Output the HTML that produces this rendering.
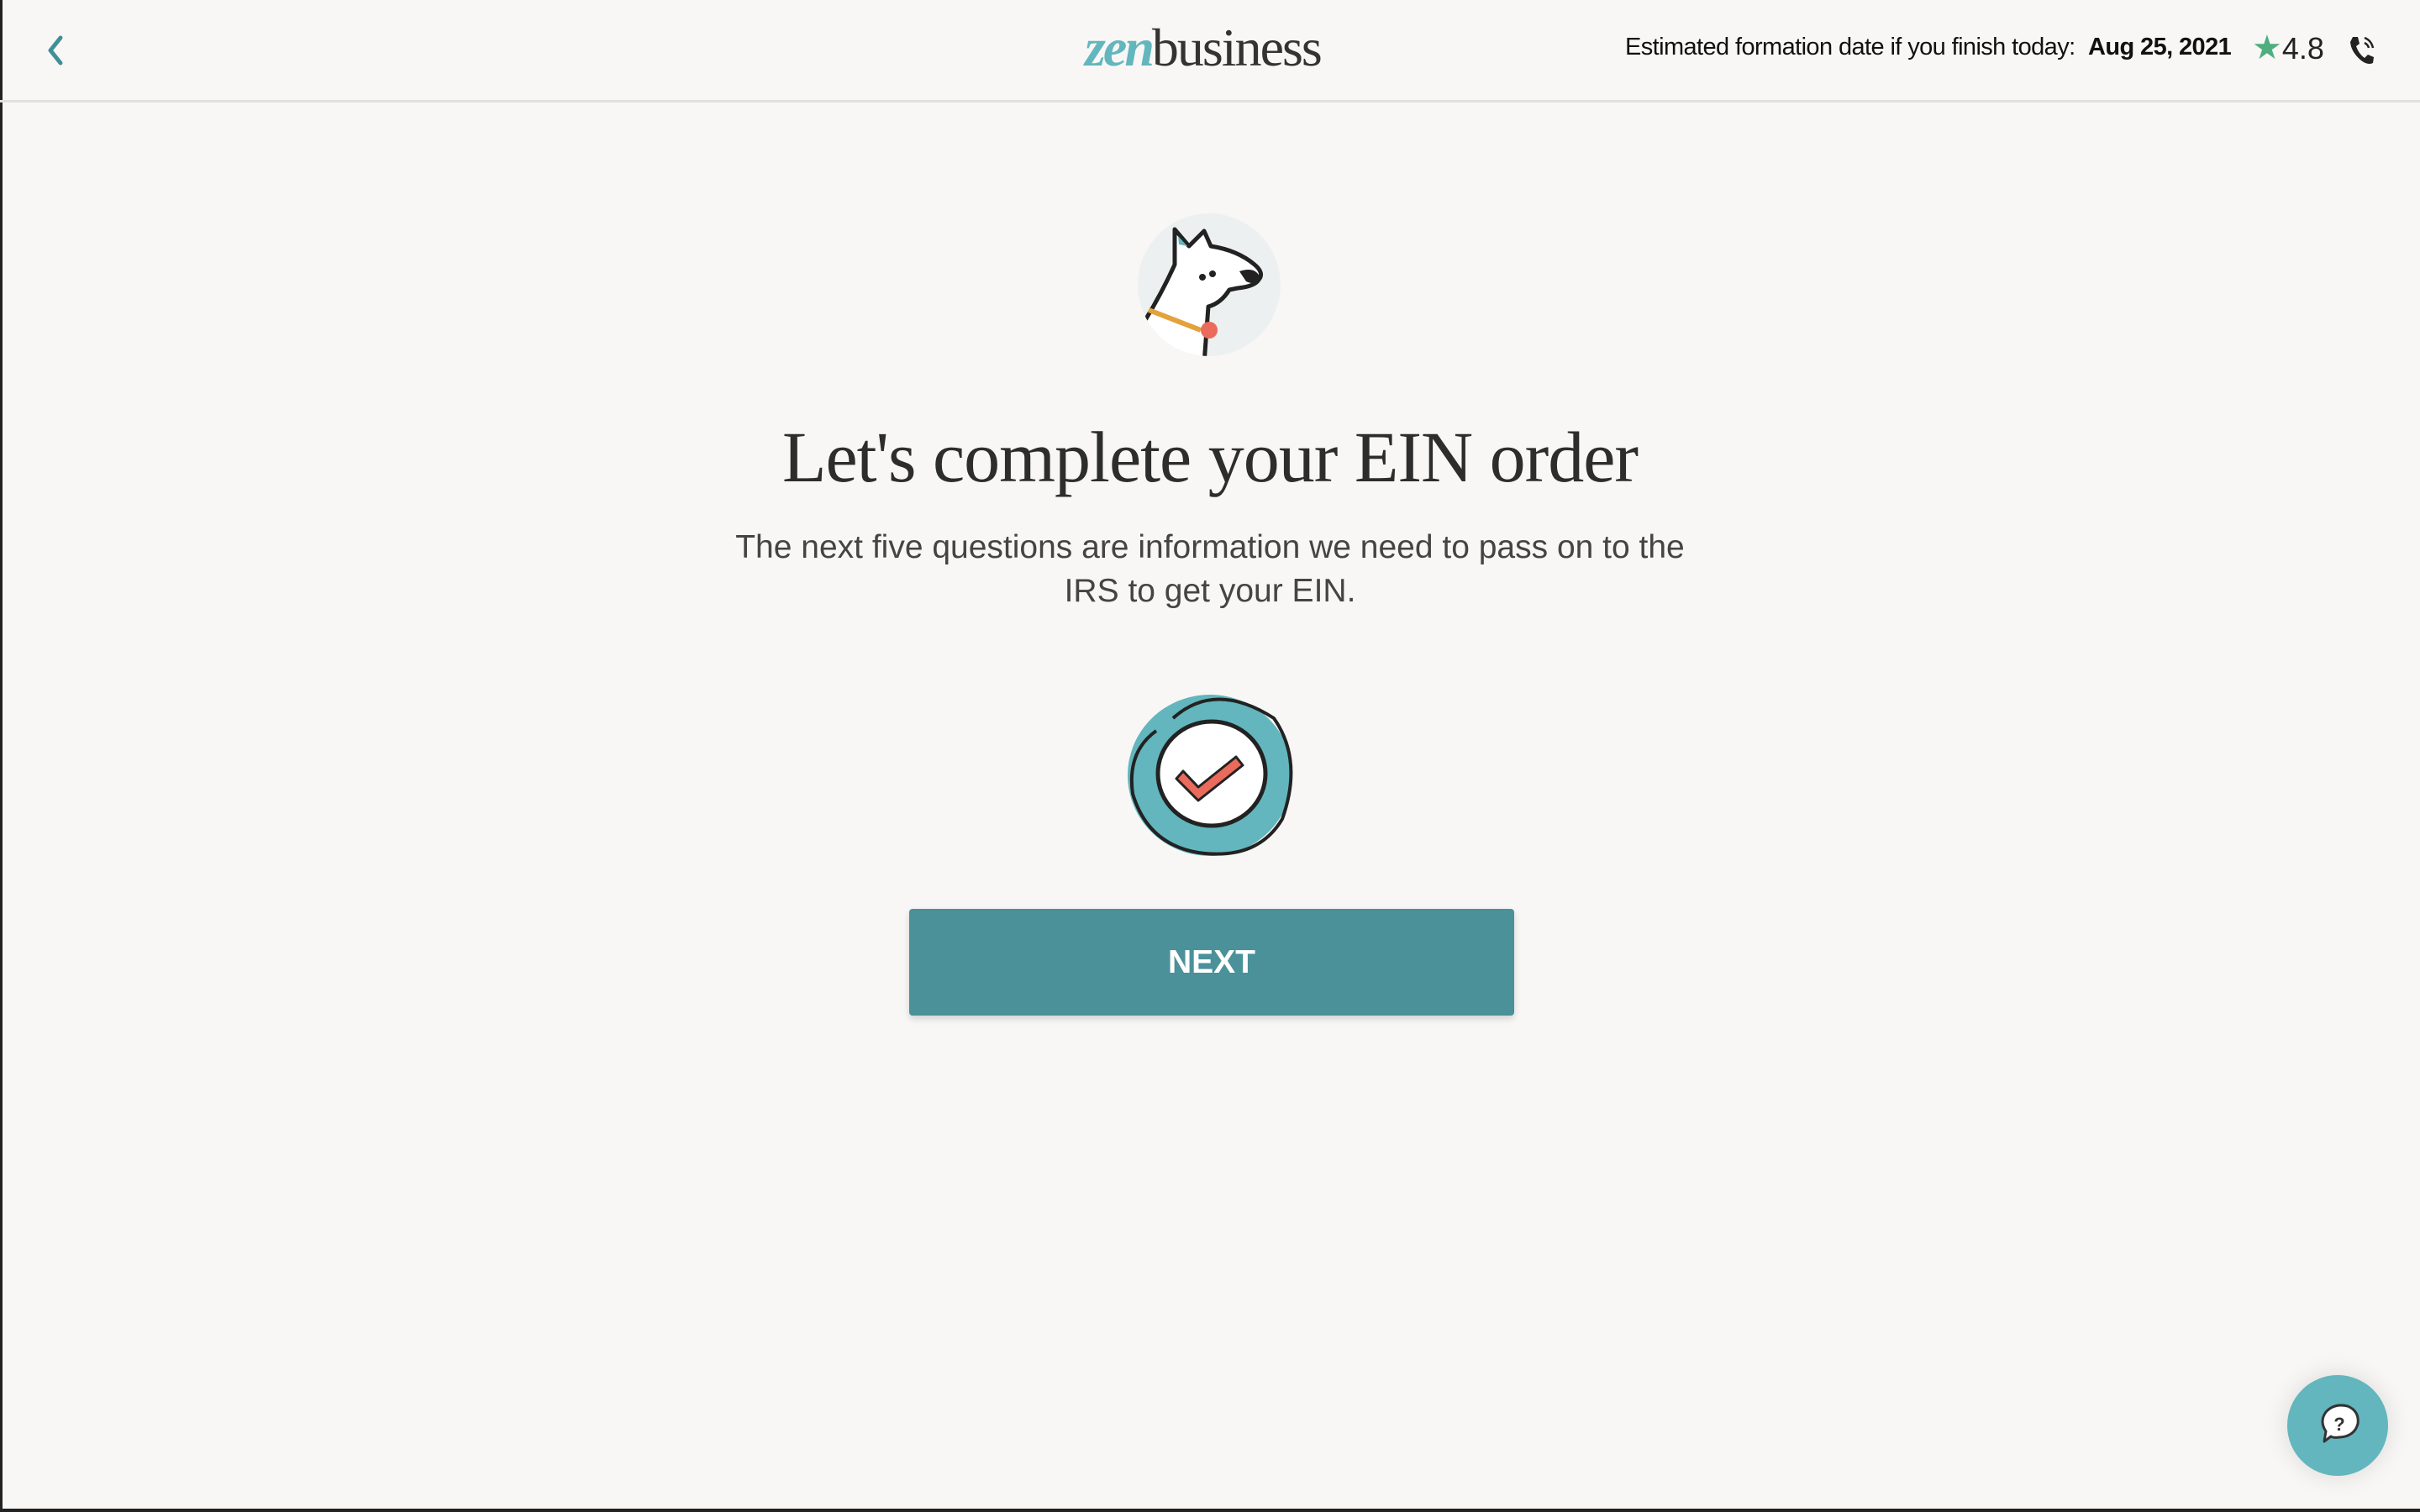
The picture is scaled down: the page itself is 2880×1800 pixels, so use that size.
<!DOCTYPE html>
<html><head><meta charset="utf-8"><style>
*{margin:0;padding:0;box-sizing:border-box}
html,body{width:2880px;height:1800px;overflow:hidden;background:#f8f7f5;font-family:"Liberation Sans",sans-serif;color:#333}
.frame{position:absolute;left:0;top:0;width:2880px;height:1800px;border-left:3px solid #222;border-bottom:4px solid #222}
.header{position:absolute;left:0;top:0;width:2880px;height:122px;border-bottom:3px solid #e2e0dd}
.logo{position:absolute;left:1291px;top:20px;font-family:"Liberation Serif",serif;font-size:64px;color:#333;letter-spacing:-2px;line-height:74px}
.logo i{color:#63b6bd;font-weight:bold;letter-spacing:-3px}
.est{position:absolute;left:1934px;top:40px;font-size:29px;color:#111;letter-spacing:-0.6px;white-space:nowrap}
.est b{margin-left:8px}
.rate{position:absolute;left:2680px;top:34px;font-size:36px;color:#222;white-space:nowrap}
.rate span{color:#4fae7e;font-size:40px}
h1{position:absolute;left:0;width:2880px;top:494px;text-align:center;font-family:"Liberation Serif",serif;font-weight:normal;font-size:86px;color:#2d2d2d;letter-spacing:-1px}
p.sub{position:absolute;left:0;width:2880px;top:626px;text-align:center;font-size:39px;line-height:52px;color:#444}
.btn{position:absolute;left:1082px;top:1082px;width:720px;height:127px;background:#4a9199;border-radius:4px;box-shadow:0 4px 8px rgba(0,0,0,.15);color:#fff;font-weight:bold;font-size:39px;text-align:center;line-height:127px}
.chat{position:absolute;left:2722px;top:1637px;width:120px;height:120px;border-radius:50%;background:#63b6bd;box-shadow:0 0 30px rgba(0,0,0,.12)}
</style></head><body>
<div class="frame"></div>
<div class="header">
<svg style="position:absolute;left:50px;top:40px" width="40" height="40"><path d="M22 5 L10 20 L22 35" fill="none" stroke="#3f8f98" stroke-width="5" stroke-linecap="round" stroke-linejoin="round"/></svg>
<div class="logo"><i>zen</i>business</div>
<div class="est">Estimated formation date if you finish today: <b>Aug 25, 2021</b></div>
<div class="rate"><span>★</span>4.8</div>
<svg style="position:absolute;left:2792px;top:40px" width="36" height="40" viewBox="0 0 36 40"><path d="M8 4 L14 4 L16 12 L12 15 Q15 24 22 29 L26 25 L33 28 L32 35 Q26 38 18 32 Q6 22 5 10 Z" fill="#222"/><path d="M22 5 Q30 8 32 17 M22 11 Q26 13 27 17" fill="none" stroke="#222" stroke-width="2.5"/></svg>
</div>
<svg style="position:absolute;left:1353px;top:253px" width="172" height="172" viewBox="0 0 172 172">
<defs><clipPath id="c"><circle cx="86" cy="86" r="85"/></clipPath></defs>
<circle cx="86" cy="86" r="85" fill="#edf0f1"/>
<g clip-path="url(#c)">
<path d="M10 128 Q30 95 45 62 L45 20 L62 40 L80 22 L88 40 Q120 45 140 62 Q152 72 145 80 Q140 88 120 90 L110 92 Q100 108 85 112 L80 180 L0 180 L0 140 Z" fill="#fff" stroke="#222" stroke-width="5" stroke-linejoin="round"/>
</g>
<path d="M50 38 L49 28 L60 40 Z" fill="#63b6bd"/>
<path d="M14 116 L76 140" stroke="#e3a33a" stroke-width="6"/>
<circle cx="86" cy="140" r="10" fill="#ea6a5c"/>
<path d="M122 70 Q140 64 146 76 Q142 88 130 82 Z" fill="#222"/>
<circle cx="78" cy="77" r="4" fill="#222"/><circle cx="90" cy="73" r="4" fill="#222"/>
</svg>
<h1>Let's complete your EIN order</h1>
<p class="sub">The next five questions are information we need to pass on to the<br>IRS to get your EIN.</p>
<svg style="position:absolute;left:1336px;top:815px" width="212" height="212" viewBox="0 0 212 212">
<ellipse cx="104" cy="108" rx="98" ry="96" fill="#63b6bd"/>
<path d="M60 40 Q110 -5 180 40 Q215 90 190 160 Q160 210 90 200 Q30 190 12 130 Q5 80 40 55" fill="none" stroke="#222" stroke-width="4"/>
<ellipse cx="106" cy="106" rx="64" ry="62" fill="#fff" stroke="#222" stroke-width="5"/>
<path d="M72 103 L90 122 L135 86 L143 96 L90 138 L64 112 Z" fill="#ea6a5c" stroke="#222" stroke-width="3" stroke-linejoin="round"/>
</svg>
<div class="btn">NEXT</div>
<div class="chat"><svg width="120" height="120" viewBox="0 0 120 120"><path d="M44 79 L46 67 Q38 55 46 44 Q56 33 72 37 Q86 43 84 58 Q80 73 62 74 Q55 75 52 73 Z" fill="#fff" stroke="#333" stroke-width="3" stroke-linejoin="round"/><text x="62" y="66" text-anchor="middle" font-family="Liberation Sans" font-weight="bold" font-size="22" fill="#333">?</text></svg></div>
</body></html>
